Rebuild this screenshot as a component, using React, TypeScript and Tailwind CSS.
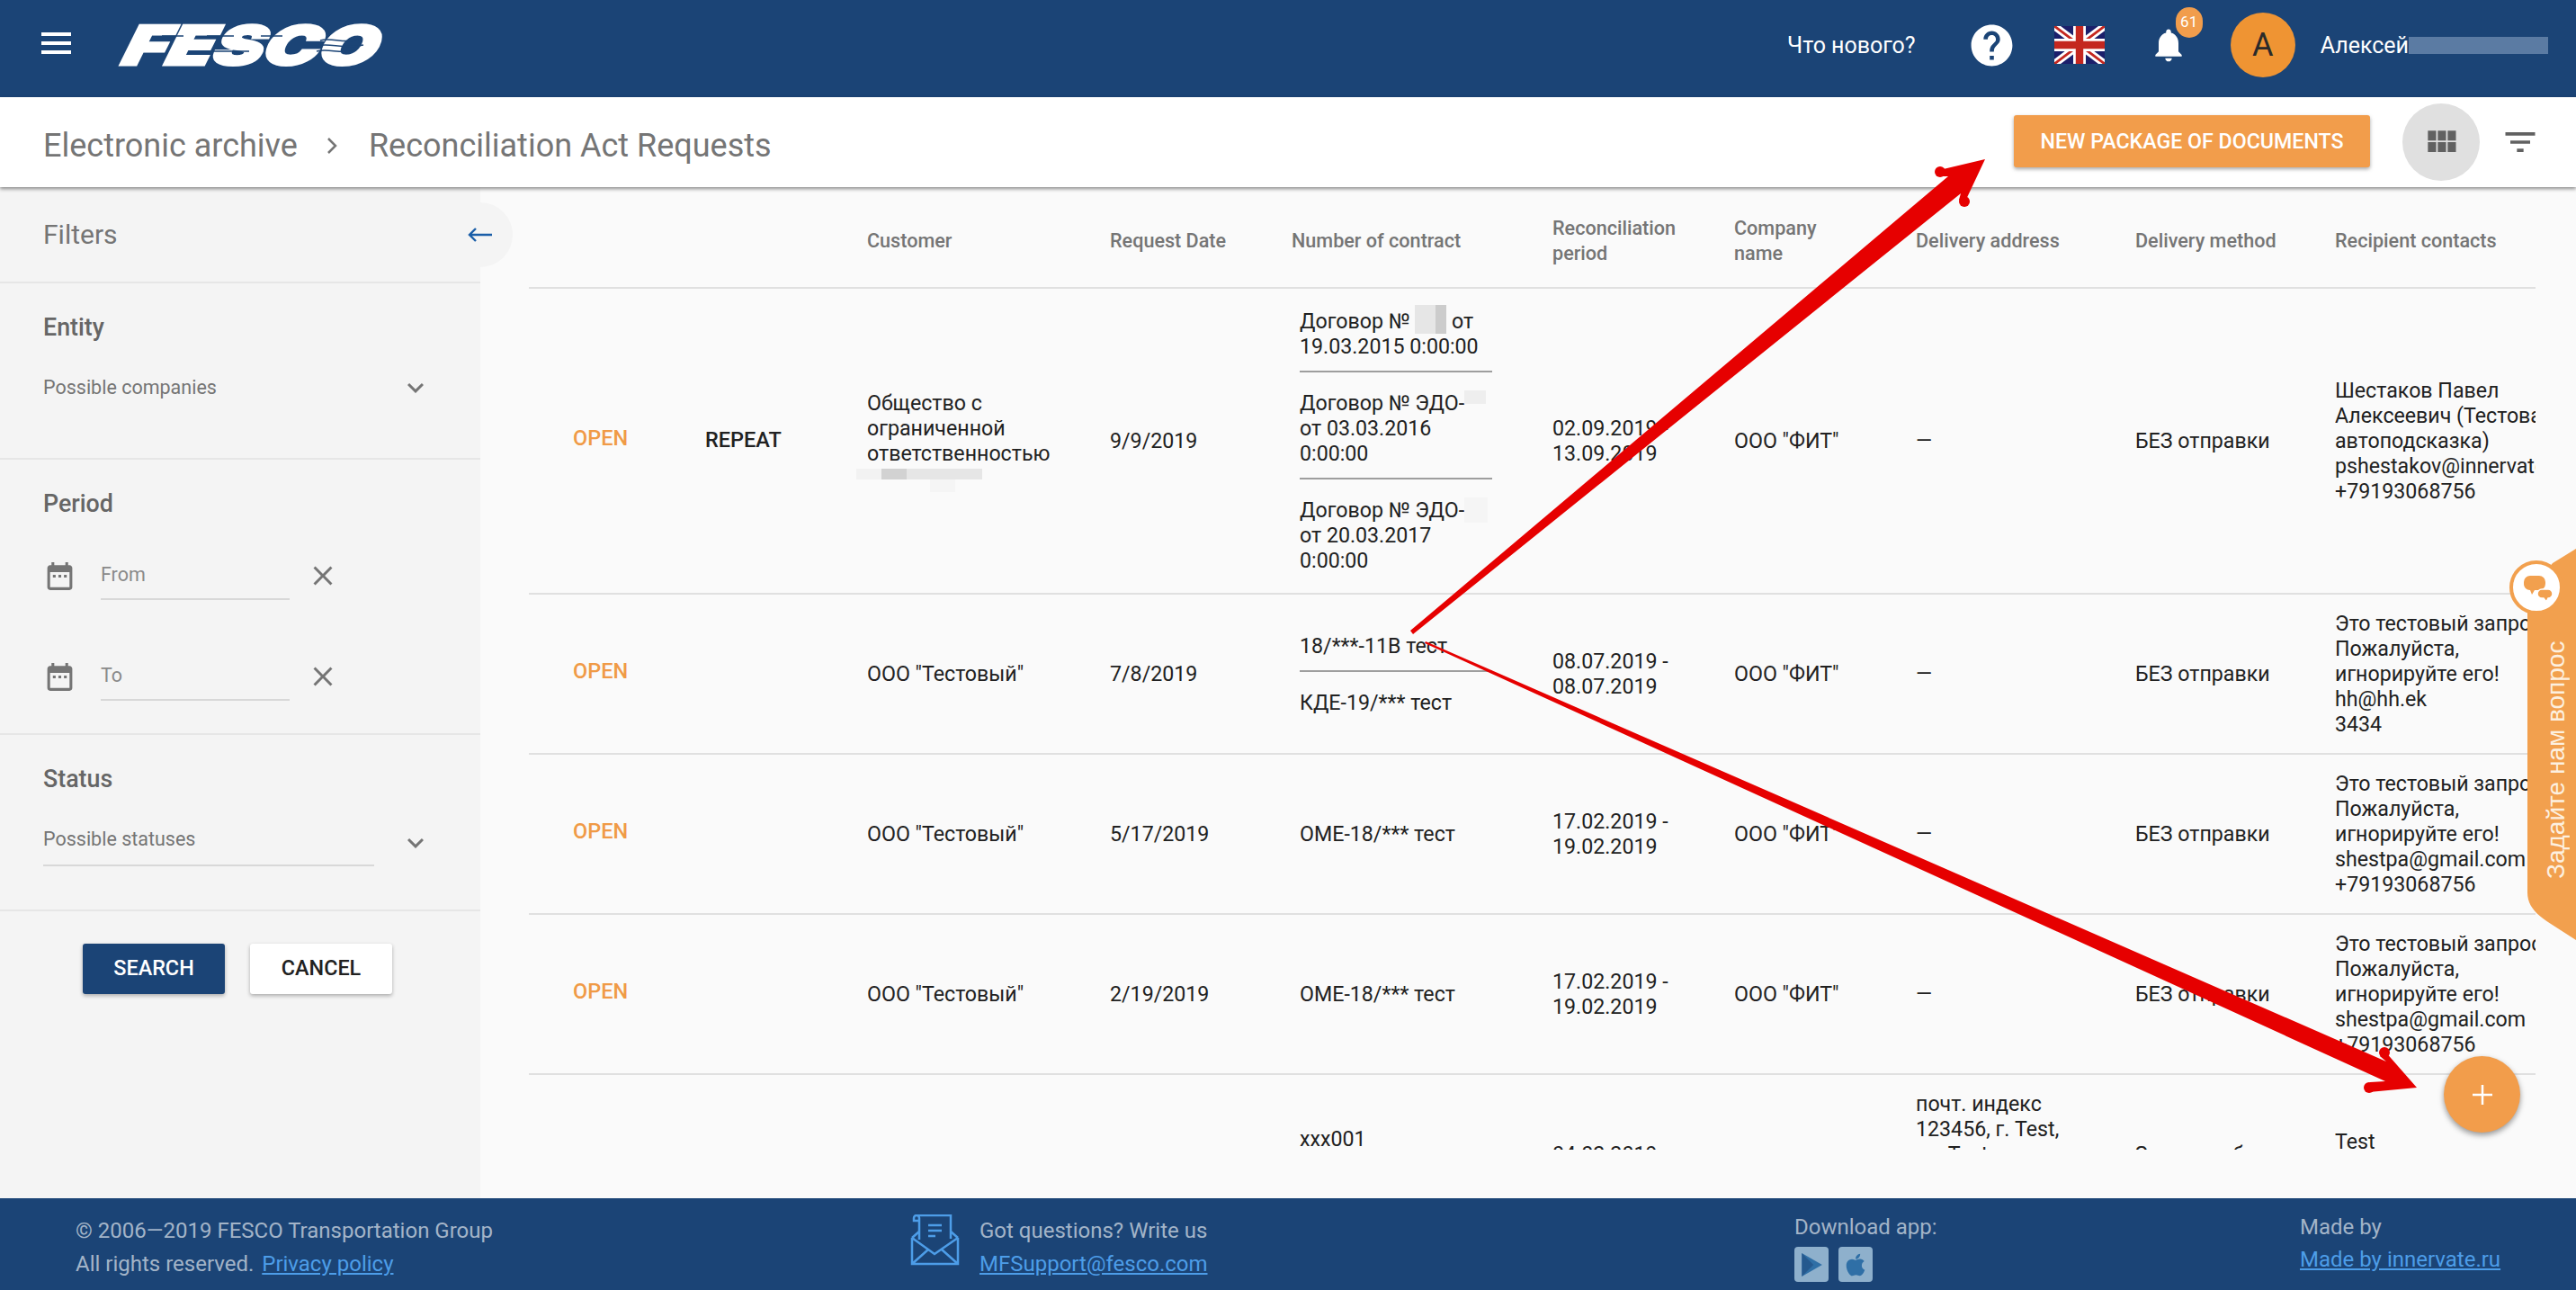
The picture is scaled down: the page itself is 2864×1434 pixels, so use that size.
import React from "react";
import { FaApple } from "react-icons/fa";

const Md = ({ d, className }: { d: string; className?: string }) => (
    <svg viewBox="0 0 24 24" fill="currentColor" className={className}>
        <path d={d} />
    </svg>
);

const ICONS = {
    close: "M19 6.41L17.59 5 12 10.59 6.41 5 5 6.41 10.59 12 5 17.59 6.41 19 12 13.41 17.59 19 19 17.59 13.41 12z",
    expand: "M16.59 8.59L12 13.17 7.41 8.59 6 10l6 6 6-6z",
    date: "M9 11H7v2h2v-2zm4 0h-2v2h2v-2zm4 0h-2v2h2v-2zm2-7h-1V2h-2v2H8V2H6v2H5c-1.11 0-1.99.9-1.99 2L3 20c0 1.1.89 2 2 2h14c1.1 0 2-.9 2-2V6c0-1.1-.9-2-2-2zm0 16H5V9h14v11z",
    module: "M4 11h5V5H4v6zm0 7h5v-6H4v6zm6 0h5v-6h-5v6zm6 0h5v-6h-5v6zm-6-7h5V5h-5v6zm6-6v6h5V5h-5z",
    filter: "M10 18h4v-2h-4v2zM3 6v2h18V6H3zm3 7h12v-2H6v2z",
    bell: "M12 22c1.1 0 2-.9 2-2h-4c0 1.1.89 2 2 2zm6-6v-5c0-3.07-1.64-5.64-4.5-6.32V4c0-.83-.67-1.5-1.5-1.5s-1.5.67-1.5 1.5v.68C7.63 5.36 6 7.92 6 11v5l-2 2v1h16v-1l-2-2z",
    help: "M12 2C6.48 2 2 6.48 2 12s4.48 10 10 10 10-4.48 10-10S17.52 2 12 2zm1 17h-2v-2h2v2zm2.07-7.75l-.9.92C13.45 12.9 13 13.5 13 15h-2v-.5c0-1.1.45-2.1 1.17-2.83l1.24-1.26c.37-.36.59-.86.59-1.41 0-1.1-.9-2-2-2s-2 .9-2 2H8c0-2.21 1.79-4 4-4s4 1.79 4 4c0 .88-.36 1.68-.93 2.25z",
};

const Logo = () => (
    <svg viewBox="0 0 299 44" className="w-[299px] h-[44px] overflow-visible">
        <text
            transform="translate(12 0) skewX(-15)"
            x="0"
            y="44"
            textLength="282"
            lengthAdjust="spacingAndGlyphs"
            fontFamily="Inter, sans-serif"
            fontWeight="900"
            fontStyle="italic"
            fontSize="60"
            fill="#fff"
            stroke="#fff"
            strokeWidth="3"
        >
            FESCO
        </text>
        <g fill="none" stroke="#1b4476" strokeWidth="1.5">
            <path d="M46 12h24M96 12h30M156 12h24M89 29h54" />
            <path d="M222 17c12-4 26 4 44-1" />
            <path d="M218 23c14-4 30 4 52-1" />
            <path d="M218 29c14-4 26 4 44-1" />
        </g>
    </svg>
);

const UkFlag = () => (
    <svg viewBox="0 0 60 45" className="w-[56px] h-[42px]">
        <rect width="60" height="45" fill="#1b1f6b" />
        <path d="M0 0l60 45M60 0L0 45" stroke="#fff" strokeWidth="9" />
        <path d="M0 0l60 45M60 0L0 45" stroke="#c4271f" strokeWidth="3" />
        <path d="M30 0v45M0 22.5h60" stroke="#fff" strokeWidth="15" />
        <path d="M30 0v45M0 22.5h60" stroke="#c4271f" strokeWidth="9" />
    </svg>
);

const Header = () => (
    <header className="h-[108px] shrink-0 bg-[#1b4476] flex items-center pl-[46px] pr-[31px] pb-[8px]">
        <div className="flex flex-col gap-[6px] w-[33px] mb-[4px]">
            <span className="h-[4px] bg-white" />
            <span className="h-[4px] bg-white" />
            <span className="h-[4px] bg-white" />
        </div>
        <div className="ml-[55px]">
            <Logo />
        </div>
        <div className="ml-auto flex items-center text-white">
            <span className="text-[25px] leading-none">Что нового?</span>
            <Md d={ICONS.help} className="w-[55px] h-[55px] ml-[57px]" />
            <div className="ml-[42px]">
                <UkFlag />
            </div>
            <div className="relative ml-[49px]">
                <Md d={ICONS.bell} className="w-[44px] h-[44px]" />
                <span className="absolute left-[30px] top-[-20px] w-[30px] h-[34px] rounded-full bg-[#f19d4c] text-[#fff] text-[17px] flex items-center justify-center">
                    61
                </span>
            </div>
            <div className="ml-[47px] w-[72px] h-[72px] rounded-full bg-[#ef9433] text-[#2a2a2a] text-[36px] flex items-center justify-center">
                А
            </div>
            <span className="ml-[28px] text-[25px] leading-none">Алексей</span>
            <span className="w-[155px] h-[19px] bg-[#5b7ba3]" />
        </div>
    </header>
);

const SubHeader = () => (
    <div className="relative z-10 h-[100px] shrink-0 bg-white shadow-[0_2px_4px_rgba(0,0,0,0.45)] flex items-center pl-[48px] pr-[40px]">
        <div className="flex items-center text-[36px] text-[#757575] pt-[8px]">
            <span>Electronic archive</span>
            <svg viewBox="0 0 12 20" className="w-[12px] h-[20px] ml-[32px] mr-[35px]" fill="none" stroke="#757575" strokeWidth="2.5">
                <path d="M2 2l8 8-8 8" />
            </svg>
            <span>Reconciliation Act Requests</span>
        </div>
        <button className="ml-auto mb-[2px] w-[396px] h-[58px] rounded-[3px] bg-[#f29d4b] text-white text-[23.2px] font-medium uppercase shadow-[0_2px_4px_rgba(0,0,0,0.35)]">
            New package of documents
        </button>
        <div className="ml-[36px] w-[86px] h-[86px] rounded-full bg-[#e0e0e0] flex items-center justify-center text-[#616161]">
            <Md d={ICONS.module} className="w-[44px] h-[44px]" />
        </div>
        <Md d={ICONS.filter} className="ml-[23px] w-[44px] h-[44px] text-[#616161]" />
    </div>
);

const SectionTitle = ({ children }: { children: React.ReactNode }) => (
    <div className="text-[26.8px] leading-[32px] font-medium text-[#666]">{children}</div>
);

const DateField = ({ label }: { label: string }) => (
    <div className="flex items-center h-[54px]">
        <Md d={ICONS.date} className="w-[37px] h-[37px] text-[#757575]" />
        <div className="ml-[27px] w-[210px] h-[54px] border-b-2 border-[#d8d8d8] flex items-center text-[21.5px] text-[#8a8a8a]">
            {label}
        </div>
        <Md d={ICONS.close} className="ml-[19px] w-[36px] h-[36px] text-[#757575]" />
    </div>
);

const Sidebar = () => (
    <aside className="relative w-[534px] shrink-0 bg-[#f4f4f4] text-[#757575]">
        <div className="h-[107px] border-b-2 border-[#e6e6e6] flex items-center pl-[48px] text-[30px]">
            Filters
        </div>
        <div className="absolute left-[498px] top-[17px] w-[72px] h-[72px] rounded-full bg-[#f4f4f4] flex items-center justify-center">
            <svg viewBox="0 0 28 18" className="w-[28px] h-[18px]" fill="none" stroke="#1a5ea8" strokeWidth="2.4">
                <path d="M27 9H2M9 2L2 9l7 7" />
            </svg>
        </div>

        <div className="h-[196px] border-b-2 border-[#e6e6e6] pl-[48px] pt-[33px]">
            <SectionTitle>Entity</SectionTitle>
            <div className="mt-[37px] flex items-center h-[28px]">
                <span className="w-[368px] text-[21.5px]">Possible companies</span>
                <Md d={ICONS.expand} className="ml-[28px] w-[36px] h-[36px]" />
            </div>
        </div>

        <div className="h-[306px] border-b-2 border-[#e6e6e6] pl-[48px] pt-[33px]">
            <SectionTitle>Period</SectionTitle>
            <div className="mt-[37px] flex flex-col gap-[58px]">
                <DateField label="From" />
                <DateField label="To" />
            </div>
        </div>

        <div className="h-[196px] border-b-2 border-[#e6e6e6] pl-[48px] pt-[33px]">
            <SectionTitle>Status</SectionTitle>
            <div className="mt-[37px] flex items-start">
                <span className="w-[368px] h-[44px] leading-[28px] border-b-2 border-[#d8d8d8] text-[21.5px]">
                    Possible statuses
                </span>
                <Md d={ICONS.expand} className="ml-[28px] w-[36px] h-[36px]" />
            </div>
        </div>

        <div className="flex gap-[28px] pl-[92px] pt-[36px]">
            <button className="w-[158px] h-[56px] rounded-[3px] bg-[#1b4476] text-white text-[23.4px] font-medium shadow-[0_2px_4px_rgba(0,0,0,0.3)]">
                SEARCH
            </button>
            <button className="w-[158px] h-[56px] rounded-[3px] bg-white text-[#212121] text-[23.4px] font-medium shadow-[0_2px_4px_rgba(0,0,0,0.3)]">
                CANCEL
            </button>
        </div>
    </aside>
);

const COLS = "grid grid-cols-[49px_147px_180px_270px_202px_290px_202px_202px_244px_222px_223px]";

const ContractBlock = ({ children, last }: { children: React.ReactNode; last?: boolean }) => (
    <div className={last ? "ml-[9px] w-[214px]" : "ml-[9px] w-[214px] pb-[13px] mb-[20px] border-b-2 border-[#9e9e9e]"}>
        {children}
    </div>
);

const Lines = ({ lines }: { lines: string[] }) => (
    <div className="whitespace-nowrap overflow-hidden">
        {lines.map((l, i) => (
            <div key={i}>{l}</div>
        ))}
    </div>
);

const FirstCustomer = () => (
    <div>
        <div>Общество с</div>
        <div>ограниченной</div>
        <div>ответственностью</div>
        <div className="mt-[3px] -ml-[12px] w-[140px] h-[12px] bg-[linear-gradient(90deg,#f2f2f2_20%,#d2d2d2_20%,#d2d2d2_40%,#e6e6e6_40%)]" />
        <div className="ml-[70px] w-[28px] h-[14px] bg-[#f5f5f5]" />
    </div>
);

type Row = {
    status?: string;
    kind?: string;
    customer: React.ReactNode;
    date: string;
    contract: React.ReactNode[];
    period: string[];
    company: string;
    address: string[];
    method: string[];
    contacts: string[];
};

const testContacts = ["Это тестовый запрос.", "Пожалуйста,", "игнорируйте его!", "shestpa@gmail.com", "+79193068756"];

const ROWS: Row[] = [
    {
        status: "OPEN",
        kind: "REPEAT",
        customer: <FirstCustomer />,
        date: "9/9/2019",
        contract: [
            <>
                Договор № <span className="inline-block align-top w-[35px] h-[32px] -mt-[4px] bg-[linear-gradient(90deg,#e6e6e6_65%,#cccccc_65%)]" /> от 19.03.2015 0:00:00
            </>,
            <>
                Договор № ЭДО-<span className="inline-block align-top w-[24px] h-[15px] bg-[#eeeeee]" /> от 03.03.2016 0:00:00
            </>,
            <>
                Договор № ЭДО-<span className="inline-block align-top w-[26px] h-[28px] bg-[#f5f5f5]" /> от 20.03.2017 0:00:00
            </>,
        ],
        period: ["02.09.2019 -", "13.09.2019"],
        company: 'ООО "ФИТ"',
        address: ["—"],
        method: ["БЕЗ отправки"],
        contacts: ["Шестаков Павел", "Алексеевич (Тестовая", "автоподсказка)", "pshestakov@innervate.ru", "+79193068756"],
    },
    {
        status: "OPEN",
        customer: 'ООО "Тестовый"',
        date: "7/8/2019",
        contract: ["18/***-11В тест", "КДЕ-19/*** тест"],
        period: ["08.07.2019 -", "08.07.2019"],
        company: 'ООО "ФИТ"',
        address: ["—"],
        method: ["БЕЗ отправки"],
        contacts: ["Это тестовый запрос.", "Пожалуйста,", "игнорируйте его!", "hh@hh.ek", "3434"],
    },
    {
        status: "OPEN",
        customer: 'ООО "Тестовый"',
        date: "5/17/2019",
        contract: ["ОМЕ-18/*** тест"],
        period: ["17.02.2019 -", "19.02.2019"],
        company: 'ООО "ФИТ"',
        address: ["—"],
        method: ["БЕЗ отправки"],
        contacts: testContacts,
    },
    {
        status: "OPEN",
        customer: 'ООО "Тестовый"',
        date: "2/19/2019",
        contract: ["ОМЕ-18/*** тест"],
        period: ["17.02.2019 -", "19.02.2019"],
        company: 'ООО "ФИТ"',
        address: ["—"],
        method: ["БЕЗ отправки"],
        contacts: testContacts,
    },
    {
        customer: "",
        date: "",
        contract: ["xxx001", "xxx002"],
        period: ["04.02.2019 -", "04.02.2019"],
        company: "",
        address: ["почт. индекс", "123456, г. Test,", "ул. Test,", "д. 1", "кв. 1", "Test"],
        method: ["Заказное без", "уведомления"],
        contacts: ["Test", "Test", "Test"],
    },
];

const Table = () => (
    <div className="w-[2231px] text-[23.2px] leading-[28px] text-[#212121]">
        <div className={`${COLS} h-[113px] pt-[8px] items-center border-b-2 border-[#e0e0e0] text-[21.6px] leading-[27.5px] font-medium text-[#757575]`}>
            <div className="col-start-4">Customer</div>
            <div>Request Date</div>
            <div>Number of contract</div>
            <div>
                Reconciliation
                <br />
                period
            </div>
            <div>
                Company
                <br />
                name
            </div>
            <div>Delivery address</div>
            <div>Delivery method</div>
            <div>Recipient contacts</div>
        </div>
        {ROWS.map((r, i) => (
            <div key={i} className={`${COLS} items-center py-[18px] border-b-2 border-[#e0e0e0]`}>
                <div />
                <div className="pb-[6px] text-[23.5px] font-medium text-[#f09a46]">{r.status}</div>
                <div className="pb-[2px] text-[23.5px] font-medium">{r.kind}</div>
                <div>{r.customer}</div>
                <div>{r.date}</div>
                <div className="py-[4px]">
                    {r.contract.map((c, j) => (
                        <ContractBlock key={j} last={j === r.contract.length - 1}>
                            {c}
                        </ContractBlock>
                    ))}
                </div>
                <Lines lines={r.period} />
                <div>{r.company}</div>
                <Lines lines={r.address} />
                <Lines lines={r.method} />
                <Lines lines={r.contacts} />
            </div>
        ))}
    </div>
);

const MailIcon = () => (
    <svg viewBox="0 0 55 57" className="w-[55px] h-[57px]" fill="none" stroke="#4d9de8" strokeWidth="2.5">
        <path d="M10 28V4a3 3 0 0 0-6 0v3h6M7 1h38v26" />
        <path d="M20 12h15M20 18h15M20 24h8" />
        <path d="M2 26l8-7M53 26l-8-7M2 26v29h51V26M2 26l25 18 26-18M2 55l18-16M53 55L35 39" />
    </svg>
);

const Footer = () => (
    <footer className="h-[102px] shrink-0 bg-[#1b4476] flex text-[24px] leading-[37px] text-[#a3b4c8] pl-[84px] pt-[18px]">
        <div className="w-[928px]">
            <div>© 2006—2019 FESCO Transportation Group</div>
            <div>
                All rights reserved. <span className="ml-[3px] text-[#4d9de8] underline">Privacy policy</span>
            </div>
        </div>
        <div className="w-[983px] flex gap-[22px]">
            <MailIcon />
            <div>
                <div>Got questions? Write us</div>
                <div className="text-[#4d9de8] underline">MFSupport@fesco.com</div>
            </div>
        </div>
        <div className="w-[562px]">
            <div className="leading-[28px]">Download app:</div>
            <div className="mt-[8px] flex gap-[11px]">
                <span className="w-[38px] h-[39px] rounded-[4px] bg-[#8eb0cc] flex items-center justify-center">
                    <svg viewBox="0 0 24 26" className="w-[26px] h-[28px]">
                        <path d="M2 1l21 12L2 25z" fill="#2f6fa6" />
                        <path d="M2 1l12 12L2 25" fill="#1b4476" opacity="0.5" />
                    </svg>
                </span>
                <span className="w-[38px] h-[39px] rounded-[4px] bg-[#8eb0cc] flex items-center justify-center text-[#2f6fa6]">
                    <FaApple size={28} />
                </span>
            </div>
        </div>
        <div>
            <div className="leading-[28px]">Made by</div>
            <div className="mt-[4px] text-[#4d9de8] underline">Made by innervate.ru</div>
        </div>
    </footer>
);

const RedArrows = () => (
    <svg viewBox="0 0 2864 1434" className="absolute inset-0 w-[2864px] h-[1434px] z-20 pointer-events-none">
        <g fill="#e60000">
            <polygon points="1568,701 1571,705 2180,215 2178,222 2183,228 2207,177 2152,190 2158,196 2166,196" />
            <circle cx="2157" cy="191" r="6" />
            <circle cx="2184" cy="224" r="6" />
            <polygon points="1585,713 1584,715 2652,1202 2635,1203 2634,1214 2687,1209 2651,1168 2646,1174 2653,1180" />
            <circle cx="2651" cy="1170" r="6" />
            <circle cx="2634" cy="1209" r="6" />
        </g>
    </svg>
);

const ChatTab = () => (
    <div className="absolute left-[2780px] top-[600px] w-[84px] h-[450px] z-30">
        <svg viewBox="0 0 84 450" className="absolute inset-0 w-[84px] h-[450px]">
            <path d="M58 26L84 10v435L56 427c-16-10-26-20-26-35V60z" fill="#f2a04e" />
            <circle cx="40" cy="53" r="28" fill="#fff" stroke="#f2a04e" strokeWidth="4" />
            <path d="M33 40h10a7 7 0 0 1 7 7v2a7 7 0 0 1-7 7h-5l-3 5-2-5c-4 0-7-3-7-7v-2a7 7 0 0 1 7-7z" fill="#f2a04e" />
            <path d="M46 55h7a5 5 0 0 1 5 5 5 5 0 0 1-5 5l-2 4-3-4h-2a5 5 0 0 1-5-5 5 5 0 0 1 5-5z" fill="#f2a04e" stroke="#fff" strokeWidth="1.5" />
        </svg>
        <div className="absolute left-[44px] top-[114px] h-[263px] [writing-mode:vertical-rl] rotate-180 whitespace-nowrap text-center text-[28px] leading-[36px] text-[#fdf0e0] [font-family:'Liberation_Sans',sans-serif]">
            Задайте нам вопрос
        </div>
    </div>
);

const Fab = () => (
    <div className="absolute left-[2717px] top-[1174px] w-[85px] h-[85px] z-20 rounded-full bg-[#f29d4b] shadow-[0_3px_6px_rgba(0,0,0,0.4)] flex items-center justify-center">
        <svg viewBox="0 0 22 22" className="w-[22px] h-[22px]" stroke="#fff" strokeWidth="2.5">
            <path d="M11 0v22M0 11h22" />
        </svg>
    </div>
);

export default function App() {
    return (
        <div className="relative w-[2864px] h-[1434px] overflow-hidden flex flex-col bg-[#fafafa] [font-family:Roboto,sans-serif]">
            <Header />
            <SubHeader />
            <main className="flex flex-1 min-h-0">
                <Sidebar />
                <div className="flex-1 min-w-0 pl-[54px] pb-[54px]">
                    <div className="h-full overflow-hidden">
                        <Table />
                    </div>
                </div>
            </main>
            <Footer />
            <RedArrows />
            <ChatTab />
            <Fab />
        </div>
    );
}
